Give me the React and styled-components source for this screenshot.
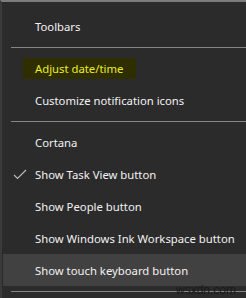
import React from "react";
import styled, { createGlobalStyle } from "styled-components";

const GlobalStyle = createGlobalStyle`
  html, body {
    margin: 0;
    padding: 0;
    background: #2b2b2b;
  }
  body {
    width: 246px;
    height: 298px;
    overflow: hidden;
    font-family: "Segoe UI", "Noto Sans", "Liberation Sans", sans-serif;
  }
`;

const Menu = styled.div`
  position: relative;
  width: 246px;
  height: 298px;
  box-sizing: border-box;
  background: #2b2b2b;
  border-top: 2px solid #7c7c7c;
  border-left: 2px solid #3a3a3a;
  padding-top: 8px;
  display: flex;
  flex-direction: column;
`;

const Item = styled.div`
  height: 32px;
  flex-shrink: 0;
  display: flex;
  align-items: center;
  position: relative;
  margin-left: 1px;
  padding-left: 32px;
  font-size: 11.3px;
  color: #f2f2f2;
  background: ${(p) => (p.$hover ? "#414141" : "transparent")};
`;

const Label = styled.span`
  padding: ${(p) => (p.$marked ? "3px 13px 3px 12px" : "0")};
  margin-left: ${(p) => (p.$marked ? "-12px" : "0")};
  background: ${(p) => (p.$marked ? "#2e2e00" : "transparent")};
  color: ${(p) => (p.$marked ? "#ecec2a" : "inherit")};
  white-space: nowrap;
`;

const Check = styled.svg`
  position: absolute;
  left: 10px;
  top: 11px;
`;

const Separator = styled.div`
  height: 10px;
  flex-shrink: 0;
  display: flex;
  align-items: center;
  padding-left: 9px;
  &::after {
    content: "";
    flex: 1;
    height: 1px;
    background: #858585;
  }
`;

const Watermark = styled.span`
  position: absolute;
  right: 10px;
  bottom: 1px;
  font-family: "Liberation Sans", sans-serif;
  font-size: 12px;
  color: #1a1a1a;
`;

export default function App() {
  return (
    <>
      <GlobalStyle />
      <Menu>
        <Item><Label>Toolbars</Label></Item>
        <Separator />
        <Item><Label $marked>Adjust date/time</Label></Item>
        <Item><Label>Customize notification icons</Label></Item>
        <Separator />
        <Item><Label>Cortana</Label></Item>
        <Item>
          <Check width="14" height="11" viewBox="0 0 14 11">
            <path d="M1 6 L4.5 9.5 L13 1" fill="none" stroke="#bdbdbd" strokeWidth="1.1" />
          </Check>
          <Label>Show Task View button</Label>
        </Item>
        <Item><Label>Show People button</Label></Item>
        <Item><Label>Show Windows Ink Workspace button</Label></Item>
        <Item $hover><Label>Show touch keyboard button</Label></Item>
        <Separator />
        <Watermark>wsxdn.com</Watermark>
      </Menu>
    </>
  );
}
